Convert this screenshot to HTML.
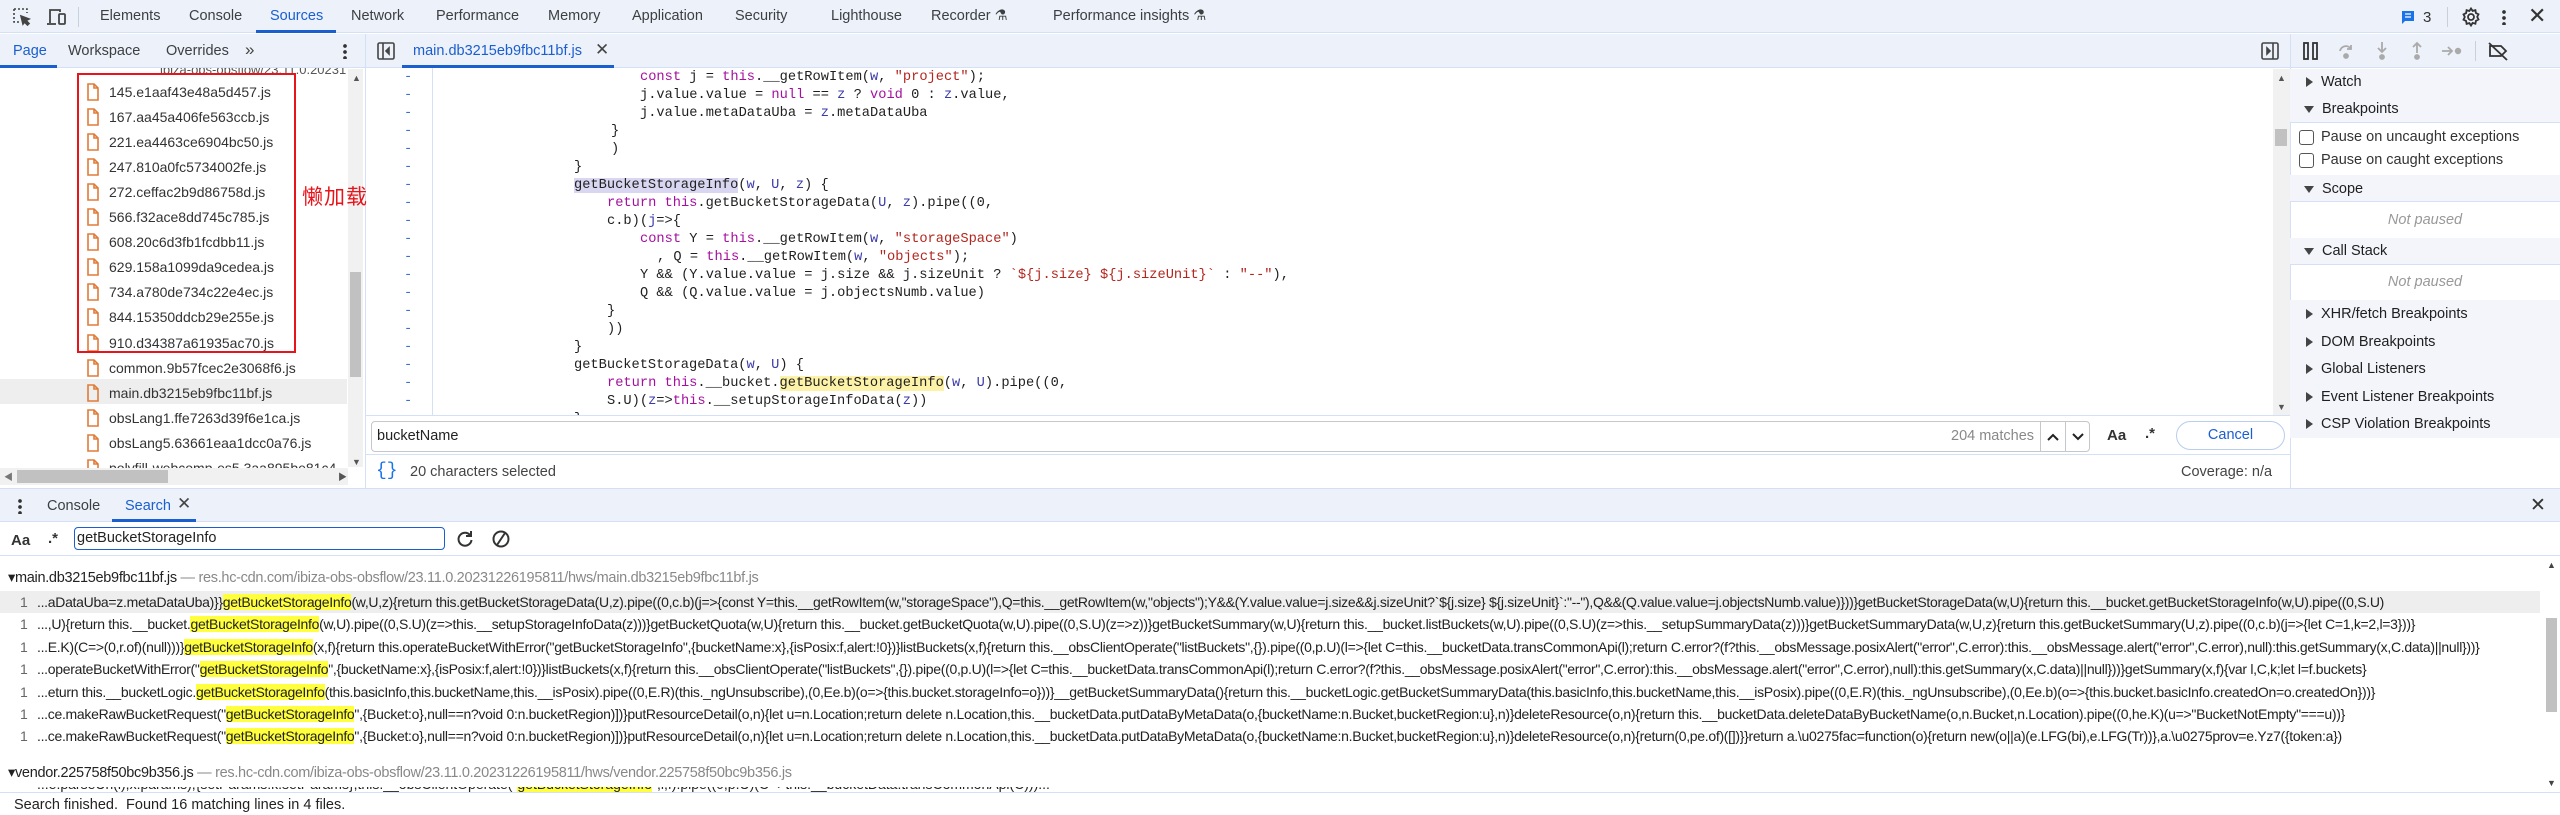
<!DOCTYPE html>
<html><head><meta charset="utf-8"><style>
*{box-sizing:border-box;margin:0;padding:0}
body{width:2560px;height:815px;position:relative;overflow:hidden;background:#fff;font-family:"Liberation Sans","Noto Sans CJK SC",sans-serif;font-size:14px;color:#1f1f1f}
.a{position:absolute;white-space:nowrap}
.bar{background:#edf1f9}
.tab{position:absolute;top:8px;font-size:14.5px;color:#3c4043}
.code{font-family:"Liberation Mono",monospace;font-size:13.7px;line-height:18px;color:#1f1f1f}
.k{color:#a5109f}.s{color:#b3261e}.v{color:#3a3aa8}
.fl{position:absolute;left:87px;height:25px;font-size:14px;color:#333;display:flex;align-items:center}
.fl svg{margin-right:10px}
.sh{position:absolute;left:2290px;width:270px;background:#f3f5fa;font-size:14px;color:#333}
.tri{display:inline-block;width:0;height:0;border-left:7px solid #444;border-top:5px solid transparent;border-bottom:5px solid transparent;margin:0 8px 0 16px;vertical-align:middle}
.trd{display:inline-block;width:0;height:0;border-top:7px solid #444;border-left:5px solid transparent;border-right:5px solid transparent;margin:0 8px 0 14px;vertical-align:middle}
.rl{position:absolute;left:0;width:2540px;height:22px;font-size:14px;line-height:22px;color:#222;overflow:hidden;text-overflow:ellipsis;padding-left:37px;padding-right:8px;letter-spacing:-0.3px}
.rl .n{position:absolute;left:20px;color:#666}
.h{background:#ffff3d}
</style></head><body>

<!-- top bar -->
<div class="a bar" style="left:0;top:0;width:2560px;height:33px;border-bottom:1px solid #d3e0f5"></div>
<svg class="a" style="left:12px;top:7px" width="20" height="20" viewBox="0 0 20 20" fill="none" stroke="#444" stroke-width="1.6"><path d="M2 2h13v4M2 2v13h5" stroke-dasharray="2 2"/><path d="M9 9l8 3-3 1.5 3 3-1.5 1.5-3-3L11 17z" fill="#444"/></svg>
<svg class="a" style="left:46px;top:7px" width="22" height="20" viewBox="0 0 22 20" fill="none" stroke="#444" stroke-width="1.8"><path d="M4 16V3h10v2"/><path d="M1 17h9"/><rect x="13" y="7" width="6" height="10" rx="1"/></svg>
<div class="a" style="left:78px;top:7px;width:1px;height:20px;background:#c8d0dc"></div>
<div class="tab" style="left:100px">Elements</div>
<div class="tab" style="left:189px">Console</div>
<div class="tab" style="left:270px;color:#1a5fd0">Sources</div>
<div class="a" style="left:256px;top:30px;width:80px;height:3px;background:#1a5fd0"></div>
<div class="tab" style="left:351px">Network</div>
<div class="tab" style="left:436px">Performance</div>
<div class="tab" style="left:548px">Memory</div>
<div class="tab" style="left:632px">Application</div>
<div class="tab" style="left:735px">Security</div>
<div class="tab" style="left:831px">Lighthouse</div>
<div class="tab" style="left:931px">Recorder ⚗</div>
<div class="tab" style="left:1053px">Performance insights ⚗</div>
<svg class="a" style="left:2400px;top:9px" width="16" height="16" viewBox="0 0 16 16"><path d="M2 2h12v10H5l-3 3z" fill="#1a73e8"/><path d="M5 5h6M5 8h6" stroke="#fff" stroke-width="1.3"/></svg>
<div class="a" style="left:2423px;top:9px;font-size:15px;color:#333">3</div>
<div class="a" style="left:2447px;top:7px;width:1px;height:20px;background:#c8d0dc"></div>
<svg class="a" style="left:2461px;top:7px" width="20" height="20" viewBox="0 0 20 20" fill="none" stroke="#333" stroke-width="1.8"><circle cx="10" cy="10" r="3"/><path d="M10 1.5l1.6 2.4 2.8-.8.5 2.9 2.6 1.3-1.3 2.6 1.3 2.6-2.6 1.3-.5 2.9-2.8-.8L10 18.5l-1.6-2.4-2.8.8-.5-2.9-2.6-1.3L3.8 10 2.5 7.4l2.6-1.3.5-2.9 2.8.8z"/></svg>
<div class="a" style="left:2502px;top:9px;width:4px;height:16px;background:radial-gradient(circle,#333 1.7px,transparent 2px) 0 0/4px 6px"></div>
<div class="a" style="left:2528px;top:3px;font-size:22px;color:#333">✕</div>

<!-- second bar -->
<div class="a bar" style="left:0;top:34px;width:2560px;height:34px;border-bottom:1px solid #d3e0f5"></div>
<div class="a" style="left:13px;top:43px;font-size:14.5px;color:#1a5fd0">Page</div>
<div class="a" style="left:0;top:65px;width:57px;height:3px;background:#1a5fd0"></div>
<div class="a" style="left:68px;top:43px;font-size:14.5px;color:#3c4043">Workspace</div>
<div class="a" style="left:166px;top:43px;font-size:14.5px;color:#3c4043">Overrides</div>
<div class="a" style="left:245px;top:40px;font-size:17px;color:#444">»</div>
<div class="a" style="left:343px;top:43px;width:4px;height:16px;background:radial-gradient(circle,#333 1.7px,transparent 2px) 0 0/4px 6px"></div>
<div class="a" style="left:365px;top:34px;width:1px;height:455px;background:#d3e0f5"></div>
<svg class="a" style="left:377px;top:42px" width="18" height="18" viewBox="0 0 18 18" fill="none" stroke="#444" stroke-width="1.6"><rect x="1" y="1" width="16" height="16" rx="1.5"/><path d="M6 1v16"/><path d="M12 6l-3 3 3 3z" fill="#444"/></svg>
<div class="a" style="left:413px;top:43px;font-size:14.5px;color:#1a5fd0">main.db3215eb9fbc11bf.js</div>
<div class="a" style="left:595px;top:40px;font-size:17px;color:#444">✕</div>
<div class="a" style="left:402px;top:65px;width:212px;height:3px;background:#1a5fd0"></div>
<svg class="a" style="left:2261px;top:42px" width="18" height="18" viewBox="0 0 18 18" fill="none" stroke="#444" stroke-width="1.6"><rect x="1" y="1" width="16" height="16" rx="1.5"/><path d="M12 1v16"/><path d="M6 6l3 3-3 3z" fill="#444"/></svg>
<div class="a" style="left:2290px;top:34px;width:1px;height:455px;background:#d3e0f5"></div>
<svg class="a" style="left:2302px;top:42px" width="18" height="18"><rect x="2" y="1" width="4" height="16" fill="none" stroke="#333" stroke-width="1.8"/><rect x="11" y="1" width="4" height="16" fill="none" stroke="#333" stroke-width="1.8"/></svg>
<svg class="a" style="left:2337px;top:42px" width="18" height="18" fill="none" stroke="#aaa" stroke-width="1.8"><path d="M3 9a6 6 0 0 1 11-2"/><path d="M14 3v4h-4"/><circle cx="9" cy="14" r="2" fill="#aaa"/></svg>
<svg class="a" style="left:2373px;top:41px" width="18" height="20" fill="none" stroke="#aaa" stroke-width="1.8"><path d="M9 1v10M5 7l4 4 4-4"/><circle cx="9" cy="16" r="2" fill="#aaa"/></svg>
<svg class="a" style="left:2408px;top:41px" width="18" height="20" fill="none" stroke="#aaa" stroke-width="1.8"><path d="M9 12V2M5 6l4-4 4 4"/><circle cx="9" cy="16" r="2" fill="#aaa"/></svg>
<svg class="a" style="left:2441px;top:42px" width="22" height="18" fill="none" stroke="#aaa" stroke-width="1.8"><path d="M1 9h10M7 5l4 4-4 4"/><circle cx="17" cy="9" r="2.3" fill="#aaa"/></svg>
<div class="a" style="left:2475px;top:41px;width:1px;height:20px;background:#c8d0dc"></div>
<svg class="a" style="left:2487px;top:41px" width="22" height="20" fill="none" stroke="#333" stroke-width="1.8"><path d="M3 5h11l5 5-5 5H3z"/><path d="M2 2l18 17"/></svg>

<!-- navigator -->
<div class="a" style="left:160px;top:62px;width:186px;overflow:hidden;font-size:13px;color:#555;clip-path:inset(6px 0 0 0)">ibiza-obs-obsflow/23.11.0.2023122619</div>
<div class="a" style="left:0;top:379px;width:347px;height:25px;background:#eeeeee"></div>
<div id="files"></div>
<div class="a" style="left:77px;top:73px;width:219px;height:280px;border:2px solid #e8141c"></div>
<div class="a" style="left:348px;top:69px;width:15px;height:398px;background:#f1f1f1"></div>
<div class="a" style="left:352px;top:73px;font-size:9px;color:#555">▲</div>
<div class="a" style="left:352px;top:457px;font-size:9px;color:#555">▼</div>
<div class="a" style="left:350px;top:272px;width:11px;height:105px;background:#c1c1c1"></div>
<div class="a" style="left:302px;top:181px;font-size:21px;color:#e8141c;font-family:'Noto Sans CJK SC',sans-serif;z-index:5;letter-spacing:1px">懒加载</div>
<div class="a" style="left:0;top:468px;width:348px;height:17px;background:#f1f1f1"></div>
<div class="a" style="left:17px;top:470px;width:151px;height:13px;background:#c1c1c1"></div>
<div class="a" style="left:4px;top:470px;font-size:9px;color:#777">◀</div>
<div class="a" style="left:338px;top:470px;font-size:9px;color:#555">▶</div>

<!-- editor -->
<div class="a" style="left:432px;top:68px;width:1px;height:347px;background:#d3e0f5"></div>
<div class="a" style="left:366px;top:68px;width:1907px;height:347px;overflow:hidden" id="ed"></div>
<div class="a" style="left:2273px;top:69px;width:17px;height:346px;background:#f1f1f1"></div>
<div class="a" style="left:2277px;top:73px;font-size:9px;color:#555">▲</div>
<div class="a" style="left:2277px;top:402px;font-size:9px;color:#555">▼</div>
<div class="a" style="left:2275px;top:129px;width:12px;height:17px;background:#c1c1c1"></div>
<div class="a" style="left:366px;top:415px;width:1924px;height:1px;background:#d3e0f5"></div>
<div class="a" style="left:371px;top:421px;width:1719px;height:31px;border:1px solid #c4c7cc;border-radius:4px"></div>
<div class="a" style="left:377px;top:428px;font-size:14.5px;color:#222">bucketName</div>
<div class="a" style="left:1951px;top:428px;font-size:14.5px;color:#888">204 matches</div>
<div class="a" style="left:2040px;top:422px;width:1px;height:29px;background:#c4c7cc"></div>
<div class="a" style="left:2065px;top:422px;width:1px;height:29px;background:#c4c7cc"></div>
<svg class="a" style="left:2046px;top:431px" width="14" height="12" fill="none" stroke="#222" stroke-width="2"><path d="M2 9l5-5 5 5"/></svg>
<svg class="a" style="left:2071px;top:431px" width="14" height="12" fill="none" stroke="#222" stroke-width="2"><path d="M2 3l5 5 5-5"/></svg>
<div class="a" style="left:2107px;top:427px;font-size:15px;font-weight:bold;color:#333">Aa</div>
<div class="a" style="left:2145px;top:425px;font-size:15px;font-weight:bold;color:#333">.*</div>
<div class="a" style="left:2176px;top:421px;width:109px;height:29px;border:1px solid #b9cdf0;border-radius:15px;text-align:center;line-height:27px;color:#1a5fd0;font-size:14.5px">Cancel</div>
<div class="a" style="left:366px;top:454px;width:1924px;height:1px;background:#d3e0f5"></div>
<div class="a" style="left:376px;top:461px;font-size:18px;color:#1a73e8;font-family:'Liberation Mono',monospace">{}</div>
<div class="a" style="left:410px;top:464px;font-size:14.5px;color:#444">20 characters selected</div>
<div class="a" style="left:2181px;top:464px;font-size:14.5px;color:#444">Coverage: n/a</div>

<!-- sidebar -->
<div class="sh" style="top:69px;height:54px;border-bottom:1px solid #d3e0f5"></div>
<div class="a" style="left:2290px;top:73px"><span class="tri"></span><span style="font-size:14.5px">Watch</span></div>
<div class="a" style="left:2290px;top:100px"><span class="trd"></span><span style="font-size:14.5px">Breakpoints</span></div>
<div class="a" style="left:2299px;top:130px;width:15px;height:15px;border:1.5px solid #555;border-radius:3px"></div>
<div class="a" style="left:2321px;top:129px;font-size:14.5px;color:#333">Pause on uncaught exceptions</div>
<div class="a" style="left:2299px;top:153px;width:15px;height:15px;border:1.5px solid #555;border-radius:3px"></div>
<div class="a" style="left:2321px;top:152px;font-size:14.5px;color:#333">Pause on caught exceptions</div>
<div class="sh" style="top:175px;height:27px;border-bottom:1px solid #d3e0f5"></div>
<div class="a" style="left:2290px;top:180px"><span class="trd"></span><span style="font-size:14.5px">Scope</span></div>
<div class="a" style="left:2290px;top:212px;width:270px;text-align:center;font-style:italic;color:#999;font-size:14.5px">Not paused</div>
<div class="sh" style="top:238px;height:27px;border-bottom:1px solid #d3e0f5"></div>
<div class="a" style="left:2290px;top:242px"><span class="trd"></span><span style="font-size:14.5px">Call Stack</span></div>
<div class="a" style="left:2290px;top:274px;width:270px;text-align:center;font-style:italic;color:#999;font-size:14.5px">Not paused</div>
<div class="sh" style="top:300px;height:138px"></div>
<div class="a" style="left:2290px;top:305px"><span class="tri"></span><span style="font-size:14.5px">XHR/fetch Breakpoints</span></div>
<div class="a" style="left:2290px;top:333px"><span class="tri"></span><span style="font-size:14.5px">DOM Breakpoints</span></div>
<div class="a" style="left:2290px;top:360px"><span class="tri"></span><span style="font-size:14.5px">Global Listeners</span></div>
<div class="a" style="left:2290px;top:388px"><span class="tri"></span><span style="font-size:14.5px">Event Listener Breakpoints</span></div>
<div class="a" style="left:2290px;top:415px"><span class="tri"></span><span style="font-size:14.5px">CSP Violation Breakpoints</span></div>

<!-- drawer -->
<div class="a bar" style="left:0;top:488px;width:2560px;height:34px;border-top:1px solid #d3e0f5;border-bottom:1px solid #d3e0f5"></div>
<div class="a" style="left:18px;top:498px;width:4px;height:16px;background:radial-gradient(circle,#333 1.7px,transparent 2px) 0 0/4px 6px"></div>
<div class="a" style="left:47px;top:498px;font-size:14.5px;color:#3c4043">Console</div>
<div class="a" style="left:125px;top:498px;font-size:14.5px;color:#1a5fd0">Search</div>
<div class="a" style="left:177px;top:494px;font-size:17px;color:#444">✕</div>
<div class="a" style="left:112px;top:519px;width:84px;height:3px;background:#1a5fd0"></div>
<div class="a" style="left:2530px;top:494px;font-size:19px;color:#333">✕</div>
<div class="a" style="left:11px;top:532px;font-size:15px;font-weight:bold;color:#333">Aa</div>
<div class="a" style="left:48px;top:530px;font-size:15px;font-weight:bold;color:#333">.*</div>
<div class="a" style="left:74px;top:527px;width:371px;height:23px;border:1.5px solid #1a5fd0;border-radius:4px"></div>
<div class="a" style="left:77px;top:530px;font-size:14.5px;color:#222">getBucketStorageInfo</div>
<svg class="a" style="left:456px;top:530px" width="18" height="18" fill="none" stroke="#333" stroke-width="2"><path d="M14 5a6.5 6.5 0 1 0 1.5 5"/><path d="M15 1v5h-5"/></svg>
<svg class="a" style="left:491px;top:529px" width="20" height="20" fill="none" stroke="#333" stroke-width="2"><circle cx="10" cy="10" r="7.5"/><path d="M14 4L6 16"/></svg>
<div class="a" style="left:0;top:555px;width:2560px;height:1px;background:#d3e0f5"></div>
<div class="a" style="left:8px;top:570px;font-size:14.5px;color:#222;letter-spacing:-0.3px">▾main.db3215eb9fbc11bf.js <span style="color:#888">— res.hc-cdn.com/ibiza-obs-obsflow/23.11.0.20231226195811/hws/main.db3215eb9fbc11bf.js</span></div>
<div class="a" style="left:0;top:591px;width:2540px;height:22px;background:#eeeeee"></div>
<div id="res"></div>
<div class="a" style="left:8px;top:765px;font-size:14.5px;color:#222;letter-spacing:-0.3px">▾vendor.225758f50bc9b356.js <span style="color:#888">— res.hc-cdn.com/ibiza-obs-obsflow/23.11.0.20231226195811/hws/vendor.225758f50bc9b356.js</span></div>
<div class="a" style="left:0;top:787px;width:2540px;height:5px;overflow:hidden"><div style="font-size:14px;padding-left:37px;margin-top:-11px;color:#222">...e.parseUrl(l),x.params),{setParams:k.setParams},this.__obsClientOperate("<span class="h">getBucketStorageInfo</span>",l,f).pipe((0,p.U)(C=>this.__bucketData.transCommonApi(C)))...</div></div>
<div class="a" style="left:2543px;top:556px;width:17px;height:236px;background:#fff"></div>
<div class="a" style="left:2547px;top:560px;font-size:9px;color:#444">▲</div>
<div class="a" style="left:2547px;top:778px;font-size:9px;color:#444">▼</div>
<div class="a" style="left:2546px;top:618px;width:11px;height:94px;background:#c1c1c1"></div>
<div class="a" style="left:0;top:792px;width:2560px;height:1px;background:#d3e0f5"></div>
<div class="a" style="left:14px;top:797px;font-size:14.5px;color:#222">Search finished.&nbsp; Found 16 matching lines in 4 files.</div>

<script>
var fs=["145.e1aaf43e48a5d457.js","167.aa45a406fe563ccb.js","221.ea4463ce6904bc50.js","247.810a0fc5734002fe.js","272.ceffac2b9d86758d.js","566.f32ace8dd745c785.js","608.20c6d3fb1fcdbb11.js","629.158a1099da9cedea.js","734.a780de734c22e4ec.js","844.15350ddcb29e255e.js","910.d34387a61935ac70.js","common.9b57fcec2e3068f6.js","main.db3215eb9fbc11bf.js","obsLang1.ffe7263d39f6e1ca.js","obsLang5.63661eaa1dcc0a76.js","polyfill-webcomp-es5.3aa895be81c4"];
var ic='<svg width="12" height="18" viewBox="0 0 12 18" fill="none" stroke="#e07b39" stroke-width="1.6"><path d="M1 1h6l4 4v12H1z"/><path d="M7 1v4h4"/></svg>';
var h='';fs.forEach(function(f,i){h+='<div class="fl" style="top:'+(79+i*25.1)+'px">'+ic+f+'</div>'});
document.getElementById('files').innerHTML=h;
var L=[[640,'<span class="k">const</span> j = <span class="k">this</span>.__getRowItem(<span class="v">w</span>, <span class="s">"project"</span>);'],
[640,'j.value.value = <span class="k">null</span> == <span class="v">z</span> ? <span class="k">void</span> 0 : <span class="v">z</span>.value,'],
[640,'j.value.metaDataUba = <span class="v">z</span>.metaDataUba'],[611,'}'],[611,')'],[574,'}'],
[574,'<span style="background:#d8d6f0">getBucketStorageInfo</span>(<span class="v">w</span>, <span class="v">U</span>, <span class="v">z</span>) {'],
[607,'<span class="k">return</span> <span class="k">this</span>.getBucketStorageData(<span class="v">U</span>, <span class="v">z</span>).pipe((0,'],
[607,'c.b)(<span class="v">j</span>=>{'],
[640,'<span class="k">const</span> Y = <span class="k">this</span>.__getRowItem(<span class="v">w</span>, <span class="s">"storageSpace"</span>)'],
[657,', Q = <span class="k">this</span>.__getRowItem(<span class="v">w</span>, <span class="s">"objects"</span>);'],
[640,'Y &amp;&amp; (Y.value.value = j.size &amp;&amp; j.sizeUnit ? <span class="s">`${j.size} ${j.sizeUnit}`</span> : <span class="s">"--"</span>),'],
[640,'Q &amp;&amp; (Q.value.value = j.objectsNumb.value)'],[607,'}'],[607,'))'],[574,'}'],
[574,'getBucketStorageData(<span class="v">w</span>, <span class="v">U</span>) {'],
[607,'<span class="k">return</span> <span class="k">this</span>.__bucket.<span style="background:#fcf2a8">getBucketStorageInfo</span>(<span class="v">w</span>, <span class="v">U</span>).pipe((0,'],
[607,'S.U)(<span class="v">z</span>=><span class="k">this</span>.__setupStorageInfoData(<span class="v">z</span>))'],[574,'}']];
h='';L.forEach(function(l,i){var t=i*18+1;h+='<div class="a code" style="left:38px;top:'+t+'px;color:#3b6fd0">-</div><div class="a code" style="left:'+(l[0]-366)+'px;top:'+t+'px">'+l[1]+'</div>'});
document.getElementById('ed').innerHTML=h;
var G='<span class="h">getBucketStorageInfo</span>';
var R=['...aDataUba=z.metaDataUba)}}'+G+'(w,U,z){return this.getBucketStorageData(U,z).pipe((0,c.b)(j=>{const Y=this.__getRowItem(w,"storageSpace"),Q=this.__getRowItem(w,"objects");Y&&(Y.value.value=j.size&&j.sizeUnit?`${j.size} ${j.sizeUnit}`:"--"),Q&&(Q.value.value=j.objectsNumb.value)}))}getBucketStorageData(w,U){return this.__bucket.getBucketStorageInfo(w,U).pipe((0,S.U)(z=>this.__setupStorageInfoData(z)))}',
'...,U){return this.__bucket.'+G+'(w,U).pipe((0,S.U)(z=>this.__setupStorageInfoData(z)))}getBucketQuota(w,U){return this.__bucket.getBucketQuota(w,U).pipe((0,S.U)(z=>z))}getBucketSummary(w,U){return this.__bucket.listBuckets(w,U).pipe((0,S.U)(z=>this.__setupSummaryData(z)))}getBucketSummaryData(w,U,z){return this.getBucketSummary(U,z).pipe((0,c.b)(j=>{let C=1,k=2,l=3}))}',
'...E.K)(C=>(0,r.of)(null)))}'+G+'(x,f){return this.operateBucketWithError("getBucketStorageInfo",{bucketName:x},{isPosix:f,alert:!0})}listBuckets(x,f){return this.__obsClientOperate("listBuckets",{}).pipe((0,p.U)(l=>{let C=this.__bucketData.transCommonApi(l);return C.error?(f?this.__obsMessage.posixAlert("error",C.error):this.__obsMessage.alert("error",C.error),null):this.getSummary(x,C.data)||null}))}',
'...operateBucketWithError("'+G+'",{bucketName:x},{isPosix:f,alert:!0})}listBuckets(x,f){return this.__obsClientOperate("listBuckets",{}).pipe((0,p.U)(l=>{let C=this.__bucketData.transCommonApi(l);return C.error?(f?this.__obsMessage.posixAlert("error",C.error):this.__obsMessage.alert("error",C.error),null):this.getSummary(x,C.data)||null}))}getSummary(x,f){var l,C,k;let l=f.buckets}',
'...eturn this.__bucketLogic.'+G+'(this.basicInfo,this.bucketName,this.__isPosix).pipe((0,E.R)(this._ngUnsubscribe),(0,Ee.b)(o=>{this.bucket.storageInfo=o}))}__getBucketSummaryData(){return this.__bucketLogic.getBucketSummaryData(this.basicInfo,this.bucketName,this.__isPosix).pipe((0,E.R)(this._ngUnsubscribe),(0,Ee.b)(o=>{this.bucket.basicInfo.createdOn=o.createdOn}))}',
'...ce.makeRawBucketRequest("'+G+'",{Bucket:o},null==n?void 0:n.bucketRegion)])}putResourceDetail(o,n){let u=n.Location;return delete n.Location,this.__bucketData.putDataByMetaData(o,{bucketName:n.Bucket,bucketRegion:u},n)}deleteResource(o,n){return this.__bucketData.deleteDataByBucketName(o,n.Bucket,n.Location).pipe((0,he.K)(u=>"BucketNotEmpty"===u))}',
'...ce.makeRawBucketRequest("'+G+'",{Bucket:o},null==n?void 0:n.bucketRegion)])}putResourceDetail(o,n){let u=n.Location;return delete n.Location,this.__bucketData.putDataByMetaData(o,{bucketName:n.Bucket,bucketRegion:u},n)}deleteResource(o,n){return(0,pe.of)([])}}return a.\\u0275fac=function(o){return new(o||a)(e.LFG(bi),e.LFG(Tr))},a.\\u0275prov=e.Yz7({token:a})'];
h='';R.forEach(function(r,i){h+='<div class="rl" style="top:'+(591+i*22.4)+'px"><span class="n">1</span>'+r+'</div>'});
document.getElementById('res').innerHTML=h;
</script>
</body></html>
